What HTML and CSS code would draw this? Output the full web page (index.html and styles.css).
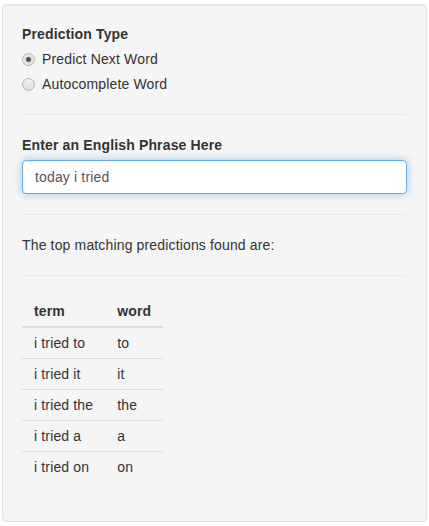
FILE: index.html
```html
<!DOCTYPE html>
<html>
<head>
<meta charset="utf-8">
<link rel="stylesheet" href="styles.css">
</head>
<body>
<div class="page">
  <div class="well">
    <div class="form-group">
      <label class="control-label">Prediction Type</label>
      <div class="options">
        <div class="radio"><label><input type="radio" name="ptype" checked><span>Predict Next Word</span></label></div>
        <div class="radio"><label><input type="radio" name="ptype"><span>Autocomplete Word</span></label></div>
      </div>
    </div>
    <hr>
    <div class="form-group">
      <label class="control-label" for="phrase">Enter an English Phrase Here</label>
      <input id="phrase" class="form-control focused" type="text" value="today i tried">
    </div>
    <hr>
    <div class="text">The top matching predictions found are:</div>
    <hr>
    <table class="shiny-table">
      <thead><tr><th>term</th><th>word</th></tr></thead>
      <tbody>
        <tr><td>i tried to</td><td>to</td></tr>
        <tr><td>i tried it</td><td>it</td></tr>
        <tr><td>i tried the</td><td>the</td></tr>
        <tr><td>i tried a</td><td>a</td></tr>
        <tr><td>i tried on</td><td>on</td></tr>
      </tbody>
    </table>
  </div>
</div>
</body>
</html>
```

FILE: styles.css
```css
* { box-sizing: border-box; }
html, body { margin: 0; padding: 0; background: #fff; }
body {
  font-family: "Liberation Sans", Arial, sans-serif;
  font-size: 14px;
  line-height: 20px;
  color: #333;
  letter-spacing: 0.15px;
}
.page { padding: 4px 2px; }
.well {
  min-height: 20px;
  padding: 19px;
  background: #f5f5f5;
  border: 1px solid #e3e3e3;
  border-radius: 4px;
  box-shadow: inset 0 1px 1px rgba(0,0,0,.05);
}
.form-group { margin-bottom: 15px; }
.control-label {
  display: block;
  font-weight: bold;
  margin-bottom: 5px;
}
.radio {
  position: relative;
  min-height: 20px;
  margin: 0 0 10px;
}
.radio + .radio { margin-top: -5px; }
.radio:last-child { margin-bottom: 0; }
.radio label {
  display: block;
  padding-left: 20px;
  font-weight: normal;
  cursor: pointer;
}
.radio input {
  -webkit-appearance: none;
  appearance: none;
  position: absolute;
  left: 0;
  top: 4px;
  margin: 0;
  width: 13px;
  height: 13px;
  border-radius: 50%;
  border: 1px solid #b4b4b4;
  background: linear-gradient(#f0f0f0, #dedede);
}
.radio input:checked {
  background: radial-gradient(circle, #4a4a4a 0, #5a5a5a 2px, #d8d8d8 3px, #f0f0f0 5.5px);
}
hr {
  margin: 20px 0;
  border: 0;
  border-top: 1px solid #eaeaea;
  height: 0;
}
.form-control {
  display: block;
  width: 100%;
  height: 34px;
  padding: 6px 12px;
  font-family: inherit;
  font-size: 14px;
  line-height: 20px;
  letter-spacing: inherit;
  color: #555;
  background: #fff;
  border: 1px solid #ccc;
  border-radius: 4px;
  outline: none;
}
.form-control.focused {
  border-color: #66afe9;
  box-shadow: inset 0 1px 1px rgba(0,0,0,.075), 0 0 8px rgba(102,175,233,.6);
}
.text { margin: 0; }
.shiny-table {
  border-collapse: collapse;
  border-spacing: 0;
  margin-bottom: 20px;
  background: transparent;
}
.shiny-table th, .shiny-table td {
  padding: 5px 12px;
  line-height: 20px;
  text-align: left;
  vertical-align: top;
}
.shiny-table th {
  font-weight: bold;
  border-bottom: 2px solid #ddd;
  vertical-align: bottom;
}
.shiny-table td { border-top: 1px solid #ddd; }
```
